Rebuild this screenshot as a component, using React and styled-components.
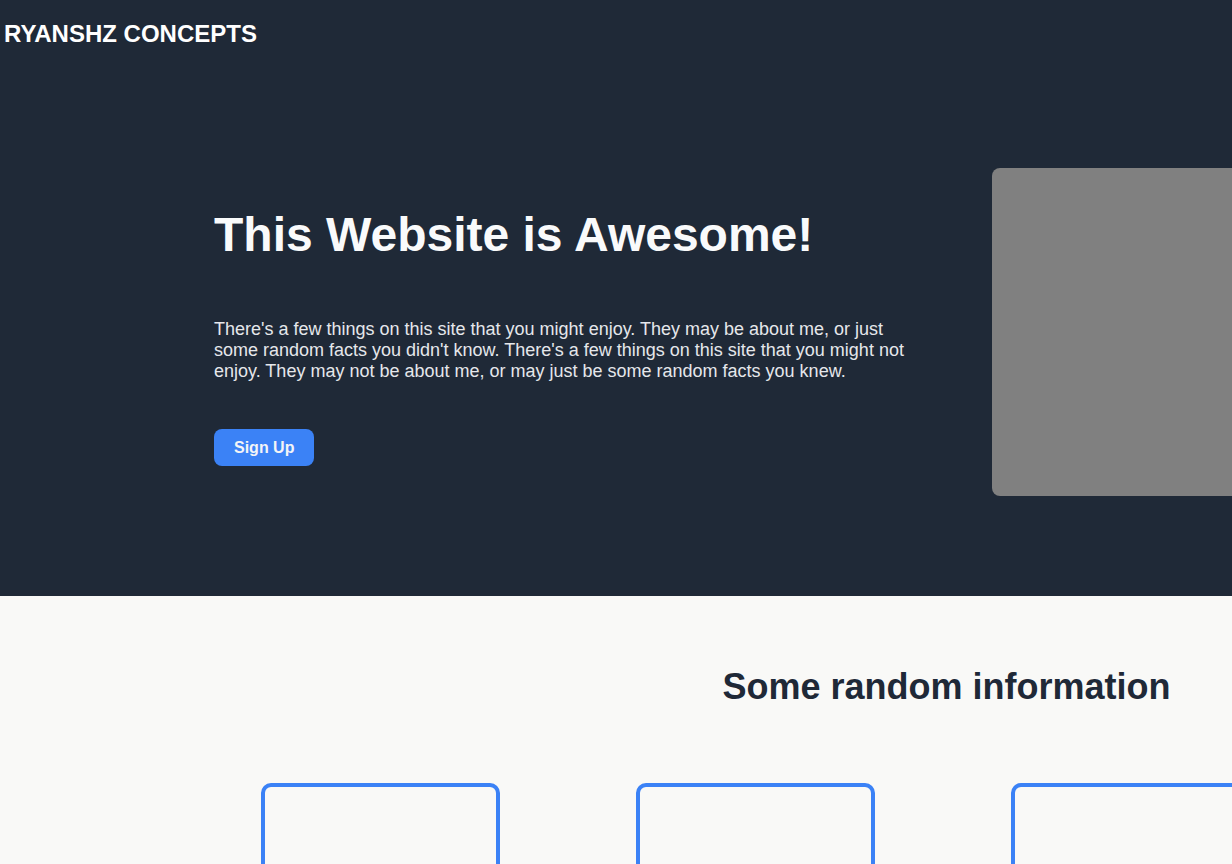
import styled, { createGlobalStyle } from "styled-components";

const GlobalStyle = createGlobalStyle`
  html, body {
    margin: 0;
    padding: 0;
    background: #f9f9f7;
    font-family: "Liberation Sans", Arial, sans-serif;
  }
  #root {
    width: 100vw;
    overflow-x: hidden;
  }
`;

const Page = styled.div`
  width: 1893px;
`;

const Dark = styled.div`
  background: #1f2937;
`;

const Header = styled.header`
  height: 67px;
  padding: 0 4px 1px;
  display: flex;
  align-items: center;
`;

const Logo = styled.div`
  color: #ffffff;
  font-size: 24px;
  font-weight: 700;
`;

const Hero = styled.section`
  display: flex;
  align-items: flex-start;
  padding: 100px 0 100px 214px;
`;

const HeroText = styled.div`
  width: 720px;
  margin-top: 35px;
  margin-right: 58px;
`;

const Title = styled.h1`
  margin: 4px 0 57px;
  color: #f9fafb;
  font-size: 48px;
  font-weight: 700;
`;

const Lead = styled.p`
  margin: 0 0 47px;
  color: #e5e7eb;
  font-size: 18px;
  line-height: 21px;
  max-width: 700px;
`;

const Button = styled.button`
  border: none;
  border-radius: 8px;
  background: #3b82f6;
  color: #f3f4f6;
  font-family: inherit;
  font-size: 16px;
  font-weight: 700;
  line-height: 17px;
  padding: 10px 20px;
  cursor: pointer;
`;

const Picture = styled.div`
  flex-shrink: 0;
  width: 400px;
  height: 328px;
  border-radius: 8px;
  background: #808080;
`;

const Info = styled.section`
  padding: 70px 0 0;
`;

const InfoTitle = styled.h2`
  margin: 0 0 75px;
  text-align: center;
  color: #1f2937;
  font-size: 36px;
  font-weight: 700;
`;

const Cards = styled.div`
  display: flex;
  gap: 136px;
  padding-left: 261px;
`;

const Card = styled.div`
  width: 239px;
  height: 300px;
  box-sizing: border-box;
  border: 4px solid #3b82f6;
  border-radius: 10px;
`;

export default function App() {
  return (
    <>
      <GlobalStyle />
      <Page>
        <Dark>
          <Header>
            <Logo>RYANSHZ CONCEPTS</Logo>
          </Header>
          <Hero>
            <HeroText>
              <Title>This Website is Awesome!</Title>
              <Lead>
                There's a few things on this site that you might enjoy. They may be about me, or just
                some random facts you didn't know. There's a few things on this site that you might not
                enjoy. They may not be about me, or may just be some random facts you knew.
              </Lead>
              <Button>Sign Up</Button>
            </HeroText>
            <Picture />
          </Hero>
        </Dark>
        <Info>
          <InfoTitle>Some random information</InfoTitle>
          <Cards>
            {[0, 1, 2, 3].map((i) => (
              <Card key={i} />
            ))}
          </Cards>
        </Info>
      </Page>
    </>
  );
}
